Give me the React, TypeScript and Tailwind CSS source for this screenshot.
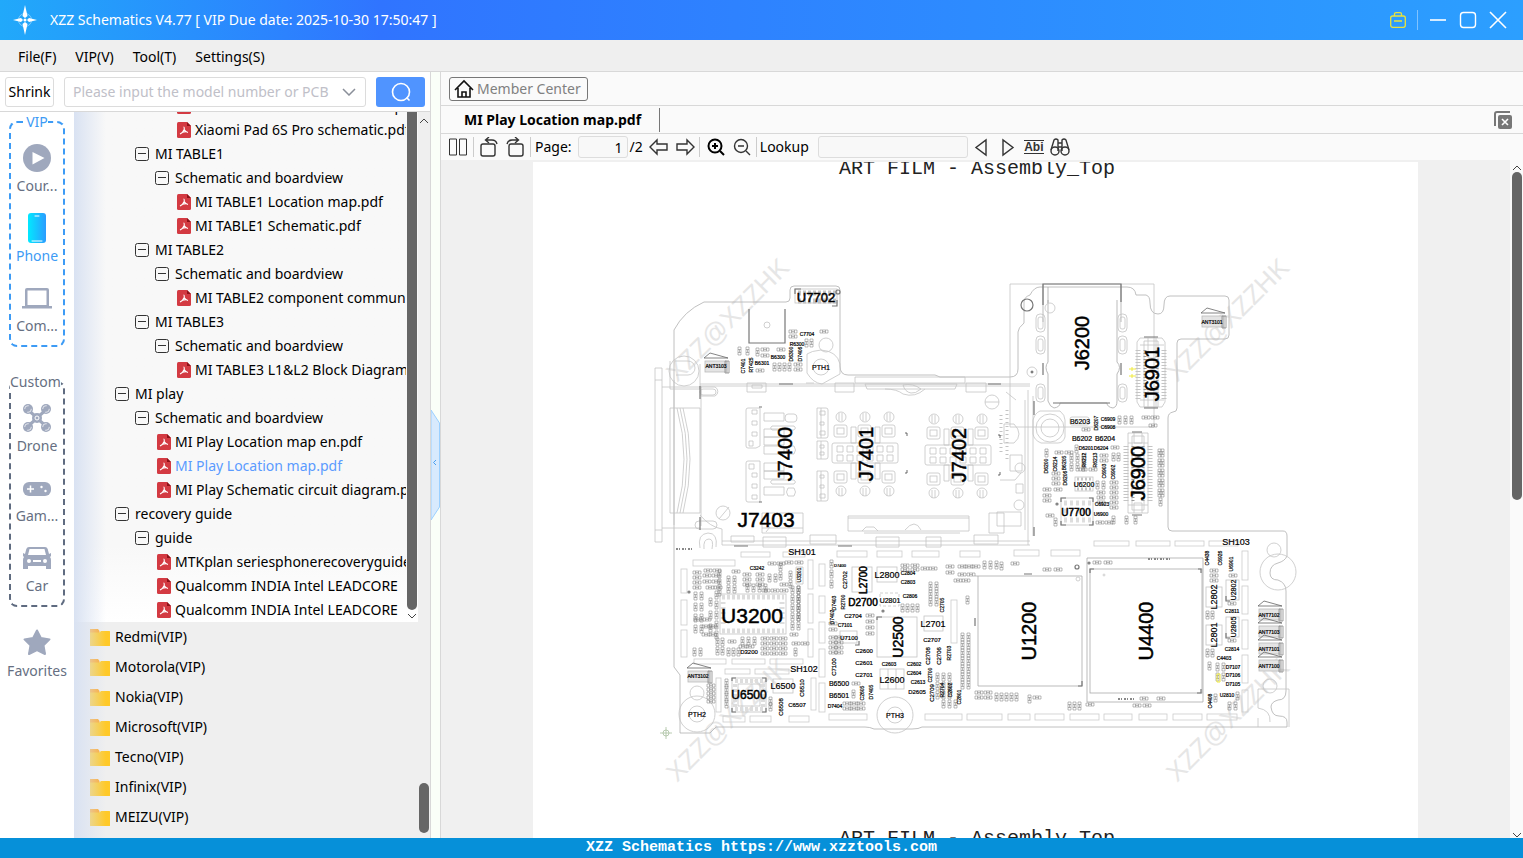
import { useState } from "react";
import type { ReactNode } from "react";

// Arbol de archivos
type TreeRow = {
  name: string;
  kind: "node" | "pdf";
  indent: string;
};

const treeRows: TreeRow[] = [
  { name: "Xiaomi Pad 6S Pro location map.pdf", kind: "pdf", indent: "pl-[103px]" },
  { name: "Xiaomi Pad 6S Pro schematic.pdf", kind: "pdf", indent: "pl-[103px]" },
  { name: "MI TABLE1", kind: "node", indent: "pl-[61px]" },
  { name: "Schematic and boardview", kind: "node", indent: "pl-[81px]" },
  { name: "MI TABLE1 Location map.pdf", kind: "pdf", indent: "pl-[103px]" },
  { name: "MI TABLE1 Schematic.pdf", kind: "pdf", indent: "pl-[103px]" },
  { name: "MI TABLE2", kind: "node", indent: "pl-[61px]" },
  { name: "Schematic and boardview", kind: "node", indent: "pl-[81px]" },
  { name: "MI TABLE2 component communication.pdf", kind: "pdf", indent: "pl-[103px]" },
  { name: "MI TABLE3", kind: "node", indent: "pl-[61px]" },
  { name: "Schematic and boardview", kind: "node", indent: "pl-[81px]" },
  { name: "MI TABLE3 L1&L2 Block Diagram.pdf", kind: "pdf", indent: "pl-[103px]" },
  { name: "MI play", kind: "node", indent: "pl-[41px]" },
  { name: "Schematic and boardview", kind: "node", indent: "pl-[61px]" },
  { name: "MI Play Location map en.pdf", kind: "pdf", indent: "pl-[83px]" },
  { name: "MI Play Location map.pdf", kind: "pdf", indent: "pl-[83px]" },
  { name: "MI Play Schematic circuit diagram.pdf", kind: "pdf", indent: "pl-[83px]" },
  { name: "recovery guide", kind: "node", indent: "pl-[41px]" },
  { name: "guide", kind: "node", indent: "pl-[61px]" },
  { name: "MTKplan seriesphonerecoveryguide.pdf", kind: "pdf", indent: "pl-[83px]" },
  { name: "Qualcomm INDIA Intel LEADCORE", kind: "pdf", indent: "pl-[83px]" },
  { name: "Qualcomm INDIA Intel LEADCORE", kind: "pdf", indent: "pl-[83px]" },
];

const brands = ["Redmi(VIP)", "Motorola(VIP)", "Nokia(VIP)", "Microsoft(VIP)", "Tecno(VIP)", "Infinix(VIP)", "MEIZU(VIP)"];

// Etiquetas de la placa: texto, centro x, centro y, tamaño, vertical
type Label = [string, number, number, number, boolean?];

const labels: Label[] = [
  ["U7702", 816, 297, 13],
  ["J6200", 1082, 343, 20, true],
  ["J6901", 1152, 374, 20, true],
  ["J6900", 1138, 473, 20, true],
  ["J7400", 785, 454, 20, true],
  ["J7401", 866, 454, 20, true],
  ["J7402", 959, 455, 20, true],
  ["J7403", 766, 519, 21],
  ["U3200", 752, 615, 21],
  ["U1200", 1029, 631, 20, true],
  ["U4400", 1146, 631, 20, true],
  ["U2500", 898, 637, 14, true],
  ["U6500", 749, 695, 12],
  ["U7700", 1076, 512, 10],
  ["SH101", 802, 552, 9],
  ["SH102", 804, 669, 9],
  ["SH103", 1236, 542, 9],
  ["D2700", 863, 602, 10],
  ["L2700", 863, 580, 10, true],
  ["L2800", 887, 575, 9],
  ["L2600", 892, 680, 9],
  ["L2701", 933, 624, 9],
  ["L6500", 783, 686, 9],
  ["L2802", 1214, 597, 9, true],
  ["L2801", 1214, 635, 9, true],
  ["U2802", 1233, 590, 7, true],
  ["U2805", 1233, 627, 7, true],
  ["B6203", 1080, 421, 7],
  ["B6202", 1082, 438, 7],
  ["B6204", 1105, 438, 7],
  ["C6909", 1108, 419, 5],
  ["C6908", 1108, 427, 5],
  ["U6200", 1084, 484, 7],
  ["C6923", 1102, 504, 5],
  ["U6900", 1101, 514, 5],
  ["D6201", 1086, 448, 5],
  ["D6204", 1101, 448, 5],
  ["D6207", 1096, 423, 5, true],
  ["D6200", 1046, 466, 5, true],
  ["C6214", 1055, 464, 5, true],
  ["B6205", 1064, 463, 5, true],
  ["D6206", 1065, 478, 5, true],
  ["R6212", 1084, 460, 5, true],
  ["R6213", 1095, 460, 5, true],
  ["C6903", 1104, 471, 5, true],
  ["C6902", 1113, 472, 5, true],
  ["PTH1", 821, 367, 7],
  ["PTH2", 697, 714, 7],
  ["PTH3", 895, 715, 7],
  ["C7704", 807, 334, 5],
  ["R6300", 797, 344, 5],
  ["B6300", 778, 357, 5],
  ["B6301", 762, 363, 5],
  ["C7401", 743, 366, 5, true],
  ["RT425", 751, 365, 5, true],
  ["D6300", 791, 354, 5, true],
  ["D7406", 800, 354, 5, true],
  ["ANT3103", 716, 366, 5],
  ["ANT3101", 1212, 322, 5],
  ["ANT3102", 698, 676, 5],
  ["ANT7102", 1269, 615, 5],
  ["ANT7103", 1269, 632, 5],
  ["ANT7101", 1269, 649, 5],
  ["ANT7100", 1269, 666, 5],
  ["C3242", 757, 568, 5],
  ["D3200", 749, 652, 6],
  ["U3201", 799, 575, 5, true],
  ["C2702", 845, 580, 6, true],
  ["C2804", 908, 573, 5],
  ["C2803", 908, 582, 5],
  ["C2806", 910, 596, 5],
  ["U2801", 890, 600, 7],
  ["D7400", 840, 565, 4],
  ["R2700", 843, 602, 5, true],
  ["D7403", 834, 603, 5, true],
  ["D7402", 832, 617, 5, true],
  ["C2704", 853, 616, 6],
  ["C7101", 845, 625, 5],
  ["U7100", 849, 638, 6],
  ["C2705", 942, 605, 5, true],
  ["C2707", 932, 640, 6],
  ["C2708", 928, 656, 6, true],
  ["C2706", 939, 656, 6, true],
  ["R2703", 949, 653, 5, true],
  ["C2600", 864, 651, 6],
  ["C2601", 864, 663, 6],
  ["C2701", 864, 675, 6],
  ["C2603", 889, 664, 5],
  ["C2602", 914, 664, 5],
  ["C2604", 914, 673, 5],
  ["C2613", 918, 682, 5],
  ["D2605", 917, 692, 6],
  ["C2700", 930, 675, 5, true],
  ["C2709", 932, 693, 6, true],
  ["R2704", 942, 690, 5, true],
  ["C2802", 950, 690, 5, true],
  ["C2801", 959, 697, 5, true],
  ["C7100", 834, 667, 6, true],
  ["B6500", 839, 683, 7],
  ["B6501", 839, 695, 7],
  ["D7404", 835, 706, 5],
  ["C2605", 862, 693, 5, true],
  ["D7405", 871, 692, 5, true],
  ["C6510", 802, 688, 6, true],
  ["C6508", 781, 707, 6, true],
  ["C6507", 797, 705, 6],
  ["C4438", 1207, 558, 5, true],
  ["C6926", 1220, 558, 5, true],
  ["U6901", 1231, 564, 5, true],
  ["C2811", 1232, 611, 5],
  ["C2814", 1232, 649, 5],
  ["C4403", 1224, 658, 5],
  ["D7107", 1233, 667, 5],
  ["D7106", 1233, 675, 5],
  ["D7105", 1233, 684, 5],
  ["U2810", 1227, 695, 5],
  ["C4408", 1210, 701, 5, true],
];

// Grupos de componentes chicos: x, y, columnas, filas, paso x, paso y, vertical
type PadGroup = [number, number, number, number, number, number, boolean?];

const padGroups: PadGroup[] = [
  [693, 571, 1, 4, 0, 5],
  [703, 574, 2, 2, 9, 6],
  [694, 592, 2, 4, 6, 11, true],
  [704, 569, 2, 1, 9, 0],
  [706, 586, 2, 1, 8, 0],
  [709, 598, 1, 3, 0, 13, true],
  [715, 591, 1, 5, 0, 10, true],
  [694, 618, 2, 1, 9, 0],
  [702, 625, 2, 2, 7, 8],
  [693, 648, 2, 1, 6, 0, true],
  [716, 638, 2, 2, 5, 9, true],
  [718, 570, 1, 3, 0, 9, true],
  [727, 576, 2, 2, 6, 9, true],
  [732, 570, 1, 1, 0, 0],
  [743, 573, 2, 3, 13, 5],
  [746, 584, 4, 1, 6, 0, true],
  [762, 589, 3, 1, 9, 0],
  [768, 562, 2, 1, 9, 0],
  [768, 574, 2, 1, 6, 0, true],
  [779, 563, 1, 2, 0, 9, true],
  [780, 583, 1, 1, 0, 0],
  [785, 561, 2, 1, 10, 0],
  [789, 571, 1, 2, 0, 9, true],
  [791, 586, 2, 5, 6, 9, true],
  [797, 586, 1, 4, 0, 9, true],
  [790, 633, 1, 1, 0, 0],
  [792, 642, 2, 1, 9, 0],
  [794, 648, 1, 1, 0, 0, true],
  [728, 640, 1, 1, 0, 0],
  [741, 637, 3, 1, 6, 0, true],
  [761, 637, 3, 4, 9, 5],
  [739, 645, 2, 1, 7, 0],
  [727, 648, 3, 1, 5, 0, true],
  [707, 684, 1, 5, 0, 4],
  [725, 679, 1, 4, 0, 7, true],
  [769, 697, 1, 2, 0, 6, true],
  [830, 560, 1, 3, 0, 10, true],
  [829, 636, 2, 4, 6, 5],
  [829, 622, 1, 2, 0, 6],
  [866, 614, 1, 4, 0, 6],
  [901, 604, 4, 1, 5, 0, true],
  [901, 564, 2, 2, 10, 4],
  [921, 567, 2, 1, 8, 0],
  [946, 565, 1, 2, 0, 6],
  [958, 565, 3, 1, 7, 0],
  [958, 573, 2, 1, 9, 0],
  [954, 579, 2, 1, 8, 0],
  [929, 582, 2, 3, 6, 8, true],
  [966, 596, 1, 1, 0, 0, true],
  [961, 633, 2, 7, 6, 8, true],
  [936, 673, 3, 3, 6, 9, true],
  [942, 700, 3, 1, 6, 0, true],
  [852, 682, 1, 1, 0, 0],
  [852, 690, 1, 1, 0, 0, true],
  [843, 702, 3, 2, 7, 5],
  [983, 561, 3, 1, 6, 0, true],
  [1000, 562, 1, 1, 0, 0, true],
  [1011, 562, 1, 1, 0, 0],
  [1043, 568, 2, 1, 11, 0],
  [1093, 561, 2, 1, 11, 0],
  [975, 691, 2, 2, 9, 5],
  [995, 693, 5, 1, 5, 0, true],
  [1028, 695, 1, 1, 0, 0, true],
  [1033, 696, 1, 1, 0, 0],
  [1068, 702, 3, 1, 5, 0, true],
  [1086, 703, 1, 1, 0, 0],
  [1140, 697, 2, 1, 17, 0],
  [1133, 704, 2, 1, 10, 0],
  [1210, 569, 1, 3, 0, 5],
  [1206, 611, 2, 1, 5, 0, true],
  [1206, 649, 2, 1, 5, 0, true],
  [1208, 662, 1, 1, 0, 0, true],
  [1216, 663, 2, 2, 6, 10, true],
  [1214, 694, 1, 1, 0, 0, true],
  [1228, 702, 2, 1, 6, 0, true],
  [1236, 692, 1, 1, 0, 0, true],
  [1229, 574, 1, 1, 0, 0],
  [1228, 602, 1, 1, 0, 0],
  [1228, 639, 1, 1, 0, 0],
  [1118, 416, 3, 1, 6, 0, true],
  [1142, 416, 2, 1, 9, 0],
  [1149, 424, 1, 1, 0, 0],
  [1082, 428, 1, 1, 0, 0],
  [1045, 449, 1, 1, 0, 0, true],
  [1055, 451, 2, 1, 10, -2],
  [1070, 454, 3, 2, 6, 9, true],
  [1075, 445, 1, 1, 0, 0, true],
  [1100, 454, 1, 2, 0, 5],
  [1111, 446, 1, 1, 0, 0],
  [1112, 453, 2, 1, 5, 0, true],
  [1079, 468, 2, 1, 10, 0],
  [1052, 472, 1, 3, 0, 5],
  [1043, 488, 2, 1, 11, 0],
  [1043, 494, 1, 2, 0, 5],
  [1096, 481, 2, 1, 6, 0, true],
  [1110, 481, 1, 6, 0, 5],
  [1097, 491, 1, 3, 0, 5],
  [1046, 514, 1, 1, 0, 0],
  [1054, 518, 1, 1, 0, 0, true],
  [1096, 521, 2, 1, 9, 0],
  [1112, 516, 1, 1, 0, 0, true],
  [1158, 449, 1, 5, 0, 10, true],
  [1161, 449, 1, 5, 0, 10, true],
  [1159, 498, 1, 1, 0, 0, true],
  [1125, 516, 2, 1, 9, 0, true],
  [789, 330, 1, 2, 0, 5],
  [820, 330, 1, 1, 0, 0],
  [805, 339, 2, 1, 5, 0, true],
  [738, 347, 2, 1, 8, 0, true],
  [761, 348, 2, 1, 16, 0],
  [756, 348, 1, 1, 0, 0, true],
  [761, 354, 1, 1, 0, 0],
  [756, 369, 1, 1, 0, 0],
  [773, 363, 4, 1, 5, 0, true],
  [794, 363, 1, 2, 0, 5],
];

const padPath = padGroups
  .map(([x, y, cols, rows, dx, dy, vertical]) => {
    let d = "";
    for (let c = 0; c < cols; c++) {
      for (let r = 0; r < rows; r++) {
        const px = x + c * dx;
        const py = y + r * dy;
        d += vertical
          ? `M${px} ${py}h3v8h-3zM${px} ${py + 2.5}h3M${px} ${py + 5.5}h3M${px + 1.5} ${py + 2.5}v3`
          : `M${px} ${py}h8v3h-8zM${px + 2.5} ${py}v3M${px + 5.5} ${py}v3M${px + 2.5} ${py + 1.5}h3`;
      }
    }
    return d;
  })
  .join("");

// Segmentos del blindaje: x, y, ancho, alto
const shieldSlots: [number, number, number, number][] = [
  [693, 560, 42, 6], [741, 552, 29, 5], [783, 552, 22, 5], [837, 551, 30, 6], [877, 551, 25, 6], [912, 551, 27, 6],
  [960, 551, 20, 6], [1014, 550, 25, 6], [1051, 550, 29, 6], [1094, 541, 35, 5], [1136, 541, 34, 5], [1175, 541, 29, 5],
  [1209, 541, 29, 5], [681, 569, 6, 24], [681, 600, 6, 25], [681, 630, 6, 27], [808, 560, 5, 29], [808, 594, 5, 29],
  [808, 629, 5, 28], [819, 564, 6, 22], [819, 596, 6, 17], [819, 622, 6, 21], [819, 649, 6, 28], [819, 683, 6, 29],
  [694, 659, 32, 5], [732, 659, 33, 5], [770, 659, 33, 5], [725, 669, 25, 5], [755, 669, 34, 5], [716, 678, 5, 34],
  [723, 716, 22, 6], [750, 716, 21, 6], [789, 716, 20, 6], [811, 678, 5, 32], [829, 714, 38, 6], [925, 714, 37, 6],
  [967, 714, 35, 6], [1008, 714, 22, 6], [1035, 714, 29, 6], [1070, 714, 29, 6], [1104, 714, 28, 6], [1139, 714, 28, 6],
  [1173, 714, 29, 6], [1207, 714, 30, 6], [1242, 551, 6, 29], [1242, 586, 6, 28], [1242, 620, 6, 29], [1242, 655, 6, 28],
  [1242, 690, 6, 22], [951, 600, 6, 43],
];

const BoardText = ({ label }: { label: Label }) => {
  const [text, x, y, size, vertical] = label;
  return (
    <text
      x={x}
      y={y}
      fontSize={size}
      strokeWidth={size > 9 ? 0.5 : 0.2}
      textAnchor="middle"
      dominantBaseline="central"
      transform={vertical ? `rotate(-90 ${x} ${y})` : undefined}
    >
      {text}
    </text>
  );
};

const ButtonConnector = ({ x, y }: { x: number; y: number }) => (
  <g>
    <rect x={x - 33} y={y - 10} width="66" height="20" rx="2" />
    {[-28, -18, -8, 2, 12, 22].map((dx) => (
      <path key={dx} d={`M${x + dx} ${y - 7}h6v6h-6zM${x + dx} ${y + 2}h6v6h-6z`} />
    ))}
    {[-24, 0, 24].map((dx) => (
      <g key={dx}>
        <rect x={x + dx - 7} y={y - 28} width="13" height="12" rx="2" />
        <rect x={x + dx - 4} y={y - 25} width="7" height="6" />
        <circle cx={x + dx} cy={y - 36} r="5" />
        <path d={`M${x + dx - 2} ${y - 40}v8M${x + dx + 1} ${y - 40}v8`} />
        <rect x={x + dx - 7} y={y + 18} width="13" height="12" rx="2" />
        <rect x={x + dx - 4} y={y + 21} width="7" height="6" />
        <circle cx={x + dx} cy={y + 38} r="5" />
        <path d={`M${x + dx - 2} ${y + 35}v8M${x + dx + 1} ${y + 35}v8`} />
      </g>
    ))}
    <path d={`M${x - 14} ${y - 26}h5v16h-5zM${x + 10} ${y - 26}h5v16h-5zM${x - 14} ${y + 10}h5v16h-5zM${x + 10} ${y + 10}h5v16h-5z`} />
    <path d={`M${x + 40} ${y - 20}h2v3M${x + 40} ${y + 20}h2v-3`} stroke="#444" />
  </g>
);

const Antenna = ({ x, y }: { x: number; y: number }) => (
  <g stroke="#888">
    <rect x={x} y={y} width="21" height="11" fill="#e4e4e4" stroke="#bbb" />
    <path d={`M${x + 20} ${y}h4v12h-4zM${x + 22} ${y}v12`} />
    <path d={`M${x - 1} ${y - 3}l6 -5l18 5z`} stroke="#666" />
  </g>
);

const BoardDrawing = () => (
  <svg viewBox="533 162 885 676" className="block w-full" role="img" aria-label="Assembly top board drawing">
    <g fill="#e6e6e6" fontFamily="'Liberation Sans', Arial, sans-serif" fontSize="26">
      {[[677, 383], [1177, 383], [677, 783], [1177, 783]].map(([x, y]) => (
        <text key={`${x}-${y}`} x={x} y={y} transform={`rotate(-45 ${x} ${y})`}>
          XZZ@XZZHK
        </text>
      ))}
    </g>

    <g fill="#222" fontFamily="'Liberation Mono', 'Courier New', monospace" fontSize="20">
      <text x="839" y="174">ART FILM - Assembly_Top</text>
      <text x="839" y="844">ART FILM - Assembly_Top</text>
    </g>

    {/* Contorno de la placa */}
    <g fill="none" stroke="#c4c4c4" strokeWidth="0.8">
      <path d="M674 330Q684 311 704 302H786Q790 302 790 298V290Q790 286 794 286H836Q840 286 840 290V366Q840 375 848 375H935L940 377H1010Q1018 377 1018 369V332Q1018 328 1024 323V302Q1024 297 1030 295Q1034 287 1040 287H1127Q1135 287 1136 295H1146Q1150 296 1150 303Q1150 314 1158 314Q1164 314 1164 305Q1164 296 1170 296H1225Q1229 296 1229 300V335Q1229 339 1225 339H1181Q1177 339 1177 343V408Q1177 412 1173 412Q1168 413 1168 418V527Q1168 531 1172 531H1283Q1287 531 1287 536V556Q1285 561 1278 563Q1270 565 1270 573Q1270 580 1278 580Q1286 583 1286 591V691Q1286 700 1278 700Q1271 702 1271 707Q1272 716 1279 716Q1287 716 1287 722V727H922Q919 729 912 729H874Q870 727 865 727H716L710 733H680V675L674 667Z" stroke="#b0b0b0" />
      <path d="M1010 284H1154V427H1010Z" />
      <path d="M655 368h7v174h-7zM655 380h7M655 530h7M662 387h38M662 528h38M674 380v145M670 408h30v105h-30zM680 408q14 50 0 105M683 408q14 50 0 105M677 408q14 50 0 105" />
      <path d="M700 384H1030M700 386H1030M722 541H1030M722 545H1030M701 386v140M700 515q10 12 22 14v16M1028 390v155M1033 396v140M1025 400v130" />
      <path d="M703 389h10a3 3 0 0 1 0 6h-10a3 3 0 0 1 0-6zM701 387h14a5 5 0 0 1 0 9h-14zM699 521h14a4 4 0 0 1 0 8h-14a4 4 0 0 1 0-8zM700 548q-3-14 8-15q10 0 8 14M704 549q-1-10 5-10q5 0 3 10" />
      <path d="M747 383h19v9h-19zM752 385h10v3h-10zM806 383h8M835 383h19v9h-19zM966 383h20v9h-20zM855 377h110v6h-110zM865 384h92l-2 5h-88z" />
      <path d="M903 385q10-2 18 4q-6 5-10 4q-6-1-8-8M885 389q12 0 18 5q12 4 22-5M731 536h23v6h-23zM763 537h23v10h-23zM810 535h26v9h-26zM876 537h23v10h-23zM926 537h15v10h-15zM974 535h24v9h-24z" />
      <path d="M848 516h121v15h-121zM848 518h121M862 531l4-4h8l4 4M905 530q10-12 16 0M864 533h96M762 513h41v20h-41zM762 528h41M766 532l4-5" />
      <path d="M746 410q0-2 2-2h12v38l-4 2h-8q-2 0-2-2zM746 463q0-2 2-2h12v41h-12q-2 0-2-2z" />
      <path d="M752 410h5v4h-5zM752 421h5v4h-5zM752 432h5v4h-5zM749 441h4v5h-4zM749 464h5v5h-5zM752 473h5v4h-5zM752 484h5v4h-5zM752 495h5v4h-5z" />
      <path d="M764 413h20v8h-20zM764 429h20v8h-20zM764 437h20v8h-20zM764 446h20v8h-20zM764 463h20v8h-20zM764 471h20v8h-20zM764 487h20v8h-20z" />
      <path d="M788 414h6q3 0 3 4t-3 4h-6q-3 0-3-4t3-4zM772 426h22q3 2 0 4h-22q-3-2 0-4zM788 446h6q3 4 0 8h-6q-3-4 0-8zM772 480h22q3 2 0 4h-22q-3-2 0-4zM788 488h6q3 4 0 8h-6q-3-4 0-8z" />
      <path d="M817 408h9q2 0 2 2v26q0 2-2 2h-9zM821 408v30M817 441h9q2 0 2 2v14q0 2-2 2h-9zM821 441v18M817 471h9q2 0 2 2v26q0 2-2 2h-9zM821 471v30M820 411h5v4h-5zM820 422h4v3h-4zM820 431h5v4h-5zM820 445h4v3h-4zM820 452h4v3h-4zM820 475h4v3h-4zM820 485h4v3h-4zM820 494h5v4h-5z" />
      <circle cx="723" cy="513" r="7" />
      <path d="M719 519l10-12" />
      <circle cx="684" cy="371" r="15" />
      <path d="M675 361h13a7 7 0 0 1 0 14h-12M670 361v28h30v-25" />
      <circle cx="767" cy="325" r="3" />
      <circle cx="826" cy="345" r="7" />
      <circle cx="821" cy="367" r="8" />
      <path d="M807 354q4-3 14-4q16 1 19 14v10l-18 10q-9-1-15-11z" />

      {/* J6200 */}
      <path d="M1048 300V362q-4 5 0 12V401q2 6 6 7q6-1 6-5H1107q0 4 6 5q4-1 4-7V374q5-7 0-12V300M1043 284v38M1121 284v38M1048 287v16" stroke="#aaa" />
      {[323, 345, 393].map((y) => (
        <g key={y}>
          <rect x="1036" y={y - 9} width="9" height="18" rx="4" />
          <rect x="1038" y={y - 6} width="5" height="12" rx="2" />
          <rect x="1118" y={y - 9} width="9" height="18" rx="4" />
          <rect x="1120" y={y - 6} width="5" height="12" rx="2" />
        </g>
      ))}
      <circle cx="1050" cy="308" r="5" />
      <circle cx="1032" cy="372" r="5" />
      <circle cx="1032" cy="372" r="1" stroke="#333" />
      <circle cx="1050" cy="428" r="14" />
      <circle cx="1050" cy="428" r="9" />
      <path d="M1040 411h20q5 4 5 9v17q-2 6-7 6h-17q-7-3-8-9v-14q2-7 7-9" />

      {/* J6901 y J6900 */}
      <path d="M1140 338h22l3 4v60l-3 5h-22l-3-5v-60zM1144 341h14v66h-14zM1140 345h24M1140 400h24M1148 338v20h8v-20M1148 407v-18h8v18" />
      <path d="M1128 433h20v80h-20zM1132 436h12v74h-12zM1128 443h20M1128 505h20M1134 433v10h8v-10M1134 513v-10h8v10" />
      <path d="M1138 350v50M1164 350v50M1126 446v56M1150 446v56" strokeWidth="5" strokeDasharray="1 2" />
      <path d="M1145 350v46M1157 350v46M1133 446v56M1143 446v56" stroke="#999" strokeWidth="3" strokeDasharray="1 2" />

      {/* Chips */}
      <rect x="720" y="594" width="66" height="40" />
      <path d="M722 597H784M722 631H784" stroke="#ddd" strokeWidth="5" strokeDasharray="3 2" />
      <path d="M723 602V627M782 602V627" stroke="#ddd" strokeWidth="5" strokeDasharray="2 3" />
      <rect x="732" y="678" width="34" height="34" />
      <rect x="738" y="684" width="22" height="22" />
      <path d="M735 681H764M735 709H764M735 684V707M763 684V707" stroke="#ddd" strokeWidth="4" strokeDasharray="3 2" />
      <rect x="877" y="617" width="40" height="40" />
      <rect x="852" y="567" width="20" height="25" />
      <rect x="877" y="567" width="20" height="15" />
      <rect x="880" y="669" width="24" height="20" />
      <path d="M888 669v20M896 669v20" />
      <rect x="924" y="616" width="19" height="15" />
      <rect x="773" y="679" width="20" height="14" />
      <rect x="880" y="593" width="19" height="13" strokeDasharray="3 2" />
      <rect x="840" y="631" width="17" height="12" />
      <path d="M796 567h7v17h-7z" />
      <path d="M975 576H1082V686H978V576M1087 558H1203V702H1087z" stroke="#aaa" />
      <rect x="1090" y="569" width="112" height="124" stroke="#aaa" />
      <circle cx="1078" cy="579" r="2" />
      <circle cx="1104" cy="575" r="1" />
      <rect x="1206" y="587" width="16" height="20" />
      <rect x="1206" y="625" width="16" height="20" />
      <rect x="1226" y="580" width="13" height="20" />
      <rect x="1226" y="617" width="13" height="20" />
      <rect x="1061" y="498" width="32" height="27" />
      <path d="M1064 503H1091M1064 520H1091M1064 511H1091" stroke="#ddd" strokeWidth="5" strokeDasharray="3 3" />
      <rect x="1075" y="477" width="18" height="14" />
      <path d="M1077 479H1092M1077 489H1092" strokeWidth="3" strokeDasharray="2 2" />
      <rect x="1070" y="417" width="19" height="8" rx="2" />
      <rect x="795" y="289" width="42" height="14" />
      <path d="M798 293H836M798 301H836" strokeWidth="5" strokeDasharray="3 2" />

      {/* Agujeros de montaje */}
      <circle cx="697" cy="714" r="18" />
      <circle cx="697" cy="714" r="8" />
      <circle cx="697" cy="693" r="7" />
      <circle cx="895" cy="715" r="18" />
      <circle cx="895" cy="715" r="8" />
      <circle cx="1278" cy="572" r="18" />
      <circle cx="1274" cy="550" r="7" />
      <circle cx="1270" cy="686" r="7" />
      <path d="M1258 689H1289V727M1258 689v19q13 2 12 14M1258 727v-9" />
      <circle cx="992" cy="402" r="7" />
      <path d="M985 402h14M1004 424h10q5 5 5 10t-5 9h-10zM1006 392l10 8M1010 455h12v16h-12zM1000 480h15l6-7M997 512h24v14h-24zM989 513h15v20h-15zM1016 484h7v9h-7z" />
      <circle cx="1020" cy="468" r="5" />
      <circle cx="1019" cy="505" r="5" />
      <path d="M1007 410v50M1001 415v40" strokeDasharray="1 3" strokeWidth="3" />
      {shieldSlots.map(([x, y, w, h]) => (
        <rect key={`${x}-${y}`} x={x} y={y} width={w} height={h} stroke="#ccc" />
      ))}
      <ButtonConnector x={865} y={453} />
      <ButtonConnector x={958} y={455} />
    </g>

    <path d={padPath} fill="none" stroke="#777" strokeWidth="0.5" />

    {/* Trazos oscuros */}
    <g fill="none" stroke="#777" strokeWidth="1.2">
      <path d="M749 309V343H785V309M1043 305V284H1121V302M1043 363v12M1121 363v12M1053 403H1110M795 294v-5h6M837 300v6h-5" />
      <path d="M700 386v13M700 517v13M779 384h14M734 546h14M838 546h14M1034 401v14M1034 527v9M988 384h13M1024 574h8M1078 686h4v-5M1090 573v-4h4M1198 569h3v4M1197 693h4v-4M975 618v8" />
      <path d="M732 681v-3h4M762 678h4v4M732 708v4h4M762 712h4v-4M877 620v-3h5M855 645h4v-4M1061 502v-4h5M1089 498h4v4M1061 521v4h5M1089 525h4v-4M1226 596v5h4M1226 633v5h4M759 407h3M759 502h3" />
      <path d="M1144 337h14M1144 408h14M1132 432h10M1132 515h10" />
      <circle cx="1027" cy="305" r="6" />
      <circle cx="1077" cy="567" r="2" />
      <circle cx="838" cy="292" r="2" />
      <circle cx="689" cy="592" r="1" />
      <circle cx="1057" cy="504" r="1" />
      <circle cx="1089" cy="563" r="1" />
      <circle cx="883" cy="611" r="1" />
    </g>
    <path d="M1148 559h24M1118 699h16M676 549h18" stroke="#888" strokeWidth="2" strokeDasharray="2 1 1 2" fill="none" />

    <g fill="none" strokeWidth="0.8">
      <Antenna x={705} y={361} />
      <Antenna x={1202} y={316} />
      <Antenna x={688} y={671} />
      <Antenna x={1259} y={609} />
      <Antenna x={1259} y={626} />
      <Antenna x={1259} y={643} />
      <Antenna x={1259} y={660} />
    </g>
    <g fill="none" stroke="#f0ea40" strokeWidth="1">
      <path d="M1129 369h7M1132 367v4M1129 376h7M1132 374v4M1217 674h3v8h-3z" />
    </g>
    <g fill="none" stroke="#a8bfa0" strokeWidth="0.8">
      <circle cx="666" cy="733" r="3" />
      <path d="M660 733h12M666 727v12" />
    </g>

    <g fill="#000" stroke="#000" fontFamily="'Liberation Sans', Arial, sans-serif">
      {labels.map((label) => (
        <BoardText key={label[0]} label={label} />
      ))}
    </g>
  </svg>
);

const PdfIcon = () => (
  <svg viewBox="0 0 14 16" className="h-4 w-[14px] shrink-0" aria-hidden="true">
    <path d="M1.500 0H10l4 4v10.500q0 1.500-1.500 1.500h-11Q0 16 0 14.500v-13Q0 0 1.500 0z" fill="#d33a42" />
    <path d="M10 0l4 4h-4z" fill="#8d1219" />
    <path d="M6.500 5q1 0 .7 2.500Q8.500 10 11 10.500M7.200 7.500Q6 10.500 3 12M5.500 10.300q2-.8 4.500-.6" fill="none" stroke="#fff" strokeWidth="1.100" />
  </svg>
);

const MinusBox = () => (
  <svg viewBox="0 0 14 14" className="size-[14px] shrink-0" fill="none" stroke="#333" aria-hidden="true">
    <rect x="0.500" y="0.500" width="13" height="13" rx="2" />
    <path d="M3 6.500h8" />
  </svg>
);

const FolderIcon = () => (
  <svg viewBox="0 0 20 17" className="h-[17px] w-5 shrink-0" aria-hidden="true">
    <path d="M0 0h8l1.500 2v3H0z" fill="#ffa726" />
    <path d="M0 3.500h9.500l1.500-1.500h8.500l.5.500v14q0 .5-.5.500H.5q-.5 0-.5-.5z" fill="#ffc928" />
  </svg>
);

const Chevron = ({ up }: { up?: boolean }) => (
  <svg viewBox="0 0 10 6" className="h-[6px] w-[10px]" fill="none" stroke="#444" aria-hidden="true">
    <path d={up ? "M1 5l4-4l4 4" : "M1 1l4 4l4-4"} />
  </svg>
);

const SideIcon = ({ children }: { children: ReactNode }) => (
  <svg viewBox="0 0 30 32" className="h-8 w-[30px]" fill="#9fa8bd" aria-hidden="true">
    {children}
  </svg>
);

type SideItemProps = {
  title: string;
  color?: string;
  children: ReactNode;
};

const SideItem = ({ title, color = "text-[#666f82]", children }: SideItemProps) => (
  <button className={`flex h-[70px] w-full flex-col items-center gap-[2px] text-sm ${color}`}>
    <SideIcon>{children}</SideIcon>
    <span>{title}</span>
  </button>
);

const Rotor = ({ x, y }: { x: number; y: number }) => (
  <>
    <circle cx={x} cy={y} r="5" />
    <circle cx={x} cy={y} r="3.300" fill="none" stroke="#fff" strokeWidth="0.700" strokeDasharray="6 4" />
  </>
);

const SideBar = () => (
  <nav className="flex w-[74px] shrink-0 flex-col items-center bg-white">
    <fieldset className="h-[235px] w-14 rounded-lg border-2 border-dashed border-[#3d9bf5]">
      <legend className="mx-auto text-sm leading-5 text-[#3d9bf5]">VIP</legend>
      <div className="pt-[10px]">
        <SideItem title="Cour...">
          <circle cx="15" cy="16" r="14" />
          <path d="M10.500 10v12.500L22.500 16z" fill="#fff" />
        </SideItem>
        <SideItem title="Phone" color="text-[#3d9bf5]">
          <defs>
            <linearGradient id="phone">
              <stop offset="0" stopColor="#02e9ff" />
              <stop offset="1" stopColor="#2b9cff" />
            </linearGradient>
          </defs>
          <rect x="6" y="1" width="18" height="30" rx="3" fill="url(#phone)" />
          <path d="M13 4h4M10 29h10" stroke="#fff" strokeLinecap="round" />
        </SideItem>
        <SideItem title="Com...">
          <path d="M3 24V8q0-2 2-2h20q2 0 2 2v16h3v2.500H0V24zM5.500 8.500V23h19V8.500z" fillRule="evenodd" />
        </SideItem>
      </div>
    </fieldset>
    <fieldset className="mt-[25px] h-[235px] w-14 rounded-lg border-2 border-dashed border-[#5f6b80]">
      <legend className="-mx-[1px] text-sm leading-5 text-[#666f82]">Custom</legend>
      <div className="pt-[10px]">
        <SideItem title="Drone">
          <path d="M5 7L13 14M25 7L17 14M5 25l8-7M25 25l-8-7" stroke="#9fa8bd" strokeWidth="3" />
          <Rotor x={6} y={7} />
          <Rotor x={24} y={7} />
          <Rotor x={6} y={25} />
          <Rotor x={24} y={25} />
          <circle cx="15" cy="16" r="5" />
          <circle cx="15" cy="16" r="2" fill="none" stroke="#fff" />
        </SideItem>
        <SideItem title="Gam...">
          <rect x="1" y="10" width="28" height="14" rx="6" />
          <path d="M5 17h7M8.500 13.500v7" stroke="#fff" strokeWidth="1.500" />
          <circle cx="19.500" cy="15" r="1.200" fill="#fff" />
          <circle cx="23.500" cy="19" r="1.200" fill="#fff" />
        </SideItem>
        <SideItem title="Car">
          <path d="M7 5h16q2 0 2.700 2L27 12l2-1v3l-1 1q1 1 1 3v9h-5v-3H6v3H1v-9q0-2 1-3l-1-1v-3l2 1l1.300-5Q5 5 7 5zM7.500 7L6 13h18l-1.500-6zM7 17a2 2 0 1 0 0 4a2 2 0 0 0 0-4zM23 17a2 2 0 1 0 0 4a2 2 0 0 0 0-4zM11 18v2h8v-2z" fillRule="evenodd" />
        </SideItem>
      </div>
    </fieldset>
    <div className="mt-5 w-full">
      <SideItem title="Favorites">
        <path d="M15 3.500l4 7.600l8.500 1.300l-6 6l1.500 8.600L15 23l-8 4l1.500-8.600l-6-6L11 11.100z" stroke="#9fa8bd" strokeWidth="2" strokeLinejoin="round" />
      </SideItem>
    </div>
  </nav>
);

const FileTree = () => {
  const [selected, setSelected] = useState("MI Play Location map.pdf");

  return (
    <div className="flex min-h-0 min-w-0 flex-1 bg-[#efefef]">
      <div className="relative flex min-w-0 flex-1 flex-col">
        <div className="flex h-[510px] w-[344px] shrink-0 bg-linear-to-b from-[#f8f8f8] from-85% to-white">
          <ul className="flex min-w-0 flex-1 flex-col justify-end overflow-hidden">
            {treeRows.map((row, i) => (
              <li key={i} className={`h-6 shrink-0 ${row.indent}`}>
                <button
                  className={`flex h-6 items-center whitespace-nowrap ${row.kind === "node" ? "gap-[6px]" : "gap-1"} ${
                    selected === row.name ? "text-[#5b9bff]" : "text-black"
                  }`}
                  onClick={() => setSelected(row.name)}
                >
                  {row.kind === "node" ? <MinusBox /> : <PdfIcon />}
                  {row.name}
                </button>
              </li>
            ))}
          </ul>
          <div className="flex w-[12px] shrink-0 flex-col items-center">
            <div className="w-[10px] flex-1 rounded-b-full bg-[#666]" />
            <div className="flex h-3 items-center">
              <Chevron />
            </div>
          </div>
        </div>
        <ul className="min-h-0 flex-1 overflow-hidden">
          {brands.map((brand) => (
            <li key={brand}>
              <button className="flex h-[30px] items-center gap-[5px] pl-4">
                <FolderIcon />
                {brand}
              </button>
            </li>
          ))}
        </ul>
        <div className="pointer-events-none absolute inset-y-0 left-0 w-8 bg-linear-to-r from-[#d9e2f2] to-transparent" />
      </div>
      <div className="flex w-3 shrink-0 flex-col items-center pt-[6px] pb-[5px]">
        <Chevron up />
        <div className="mt-auto h-[50px] w-[10px] rounded-full bg-[#666]" />
      </div>
    </div>
  );
};

const TitleBar = () => (
  <header className="flex h-10 shrink-0 items-center bg-linear-to-r from-[#21a9fa] via-[#3074ff] via-25% to-[#2c9fff] text-white">
    <svg viewBox="0 0 24 30" className="ml-[13px] h-[30px] w-6" aria-hidden="true">
      <path d="M12 0l2.500 11L12 13l-2.500-2zM12 30l2.500-11L12 17l-2.500 2zM0 15l8-2l2 2l-2 2zM24 15l-8-2l-2 2l2 2z" fill="#fff" />
      <circle cx="12" cy="15" r="6.500" fill="none" stroke="#fff" strokeWidth="0.700" opacity="0.600" />
      <circle cx="12" cy="15" r="1.500" fill="#fff" />
    </svg>
    <h1 className="ml-[13px] text-sm">XZZ Schematics V4.77 [ VIP Due date: 2025-10-30 17:50:47 ]</h1>
    <div className="mr-4 ml-auto flex items-center">
      <button aria-label="Toolbox">
        <svg viewBox="0 0 16 16" className="size-4" fill="none" stroke="#e9e33c" strokeWidth="1.300">
          <rect x="0.700" y="4" width="14.600" height="11.300" rx="2" />
          <path d="M4.500 4V2q0-1.300 1.500-1.300h4q1.500 0 1.500 1.300v2M4 9h8" />
        </svg>
      </button>
      <span className="mx-[11px] h-5 w-px bg-white/40" />
      <button aria-label="Minimize">
        <svg viewBox="0 0 18 18" className="size-[18px]" stroke="#fff" strokeWidth="1.600">
          <path d="M1 9h16" />
        </svg>
      </button>
      <button aria-label="Maximize" className="mx-3">
        <svg viewBox="0 0 18 18" className="size-[18px]" fill="none" stroke="#fff" strokeWidth="1.400">
          <rect x="1.500" y="1.500" width="15" height="15" rx="3" />
        </svg>
      </button>
      <button aria-label="Close">
        <svg viewBox="0 0 18 18" className="size-[18px]" stroke="#fff" strokeWidth="1.600">
          <path d="M1 1l16 16M17 1L1 17" />
        </svg>
      </button>
    </div>
  </header>
);

const ToolButton = ({ title, children }: { title: string; children: ReactNode }) => (
  <button aria-label={title} title={title}>
    <svg viewBox="0 0 20 20" className="size-5" fill="none" stroke="#333" strokeWidth="1.400">
      {children}
    </svg>
  </button>
);

const Divider = () => <span className="h-5 w-px bg-[#ccc]" />;

const PdfToolbar = () => {
  const [page, setPage] = useState("1");
  const [lookup, setLookup] = useState("");

  return (
    <div className="flex h-[26px] shrink-0 items-center bg-[#fafafa] pl-[7px]">
      <ToolButton title="Two pages">
        <path d="M1.500 2h7v16h-7zM11.500 2h7v16h-7z" strokeWidth="1" />
      </ToolButton>
      <span className="ml-[5px] flex items-center gap-[5px]">
        <Divider />
        <ToolButton title="Rotate left">
          <rect x="2" y="7" width="14" height="12" rx="2" />
          <path d="M7 3h6q4 0 5 4M10 0L6.500 3L10 6" />
        </ToolButton>
      </span>
      <span className="ml-[6px] flex items-center gap-[5px]">
        <ToolButton title="Rotate right">
          <rect x="4" y="7" width="14" height="12" rx="2" />
          <path d="M13 3H7Q3 3 2 7M10 0l3.500 3L10 6" />
        </ToolButton>
        <Divider />
      </span>
      <label htmlFor="page" className="ml-1">
        Page:
      </label>
      <input
        id="page"
        className="mr-[2px] ml-[6px] h-[22px] w-[50px] rounded-[3px] border border-[#ddd] bg-[#f8f8f8] px-1 text-right"
        value={page}
        onChange={(e) => setPage(e.target.value)}
      />
      <span>/2</span>
      <span className="ml-[6px] flex items-center gap-[6px]">
        <ToolButton title="Previous page">
          <path d="M1 10l7-7v4h10v6H8v4z" />
        </ToolButton>
        <ToolButton title="Next page">
          <path d="M19 10l-7-7v4H2v6h10v4z" />
        </ToolButton>
      </span>
      <span className="ml-1 flex items-center gap-[6px]">
        <Divider />
        <ToolButton title="Zoom in">
          <circle cx="9" cy="9" r="6.500" stroke="#000" strokeWidth="2" />
          <path d="M6 9h6M9 6v6M14 14l4 4" stroke="#000" strokeWidth="2" />
        </ToolButton>
        <ToolButton title="Zoom out">
          <circle cx="9" cy="9" r="6.500" />
          <path d="M6 9h6M14 14l4 4" />
        </ToolButton>
      </span>
      <span className="ml-1 flex items-center gap-[3px]">
        <Divider />
        <label htmlFor="lookup">Lookup</label>
      </span>
      <input
        id="lookup"
        className="ml-[9px] h-[22px] w-[150px] rounded-[3px] border border-[#ddd] bg-[#f8f8f8] px-1"
        value={lookup}
        onChange={(e) => setLookup(e.target.value)}
      />
      <span className="ml-1 flex items-center gap-[6px]">
        <ToolButton title="Find previous">
          <path d="M14 3v15L4 10.500z" />
        </ToolButton>
        <ToolButton title="Find next">
          <path d="M5 3v15l10-7.500z" />
        </ToolButton>
        <button className="h-[14px] w-5 border-y border-[#333] text-center font-['Liberation_Sans',sans-serif] text-xs leading-3 font-bold text-[#333]">
          Abi
        </button>
        <ToolButton title="Search in document">
          <circle cx="5" cy="14" r="4" />
          <circle cx="15" cy="14" r="4" />
          <path d="M1 13L4 3q2-2 4 0v11M19 13L16 3q-2-2-4 0v11M8 6h4M8 10h4" />
        </ToolButton>
      </span>
    </div>
  );
};

const Splitter = () => (
  <div className="flex w-[11px] shrink-0 flex-col justify-center border-x border-[#d8d8d8] bg-[#fafff8]">
    <button aria-label="Collapse panel" className="mb-[-20px]">
      <svg viewBox="0 0 9 110" className="h-[110px] w-[9px]" fill="none">
        <path d="M0 0L8.500 13V97L0 110z" fill="#d8eafd" stroke="#9bd0ff" />
        <path d="M5 50L2.500 52.500l2.500 2.500" stroke="#4a9ff0" />
      </svg>
    </button>
  </div>
);

export default function App() {
  const [model, setModel] = useState("");

  return (
    <div className="flex h-screen flex-col overflow-hidden bg-[#efefef] font-['Noto_Sans','Noto_Sans_CJK_SC',sans-serif] text-sm text-black">
      <TitleBar />
      <nav className="flex h-8 shrink-0 items-center gap-[19px] border-b border-[#d8d8d8] bg-[#efefef] pt-[2px] pl-[18px]">
        <button>File(F)</button>
        <button>VIP(V)</button>
        <button>Tool(T)</button>
        <button>Settings(S)</button>
      </nav>

      <div className="flex min-h-0 flex-1">
        <aside className="flex w-[430px] shrink-0 flex-col">
          <div className="flex h-10 shrink-0 items-center border-b border-[#d8d8d8] bg-white pl-[5px]">
            <button className="h-[30px] w-[49px] rounded-[3px] border border-[#dcdcdc] text-center">Shrink</button>
            <div className="ml-[10px] flex h-[30px] w-[302px] items-center rounded-[3px] border border-[#dcdcdc] pl-2">
              <input
                aria-label="Model number or PCB"
                className="w-[264px] outline-none placeholder:text-[#c0c0c8]"
                placeholder="Please input the model number or PCB"
                value={model}
                onChange={(e) => setModel(e.target.value)}
              />
              <svg viewBox="0 0 14 8" className="ml-[5px] h-2 w-[14px]" fill="none" stroke="#8a8f99" strokeWidth="1.500" aria-hidden="true">
                <path d="M1 1l6 6l6-6" />
              </svg>
            </div>
            <button aria-label="Search" className="ml-[10px] flex h-[30px] w-[49px] items-center justify-center rounded-[3px] bg-[#5094ff]">
              <svg viewBox="0 0 20 20" className="size-5" fill="none" stroke="#fff" strokeWidth="1.600">
                <circle cx="10" cy="10" r="8.500" />
                <path d="M15.500 15.500l3 3" />
              </svg>
            </button>
          </div>
          <div className="flex min-h-0 flex-1">
            <SideBar />
            <FileTree />
          </div>
        </aside>

        <Splitter />

        <main className="flex min-w-0 flex-1 flex-col">
          <div className="flex h-[34px] shrink-0 items-center border-b border-[#d8d8d8] bg-[#fafafa] pl-2">
            <button className="flex h-6 w-[139px] items-center gap-[3px] rounded-[3px] border border-[#777] pl-1 whitespace-nowrap text-[#808080]">
              <svg viewBox="0 0 20 20" className="size-5 shrink-0" fill="none" stroke="#111" strokeWidth="1.600" aria-hidden="true">
                <path d="M1 11l9-9l9 9M4 9v9h12V9M8 18v-5h4v5" />
              </svg>
              Member Center
            </button>
          </div>
          <div className="flex h-7 shrink-0 items-center border-b border-[#d8d8d8] bg-[#fafafa] pr-[11px]">
            <button className="h-6 border-r border-[#777] pr-[18px] pl-[23px] font-bold">MI Play Location map.pdf</button>
            <button aria-label="Close all tabs" className="ml-auto">
              <svg viewBox="0 0 18 18" className="size-[18px]">
                <path d="M1 15V3q0-2 2-2h13" fill="none" stroke="#777" strokeWidth="2" />
                <rect x="4" y="4" width="14" height="14" rx="2" fill="#777" />
                <path d="M8 8l6 6M14 8l-6 6" stroke="#fff" strokeWidth="1.600" />
              </svg>
            </button>
          </div>
          <PdfToolbar />
          <div className="flex min-h-0 flex-1">
            <div className="min-w-0 flex-1 overflow-hidden bg-[#f0f0f0] pt-[2px]">
              <div className="mx-auto w-[885px] max-w-full bg-white">
                <BoardDrawing />
              </div>
            </div>
            <div className="flex w-[13px] shrink-0 flex-col items-center bg-[#fafafa] pt-[5px]">
              <Chevron up />
              <div className="mt-[1px] h-[328px] w-[10px] rounded-full bg-[#666]" />
              <div className="mt-auto">
                <Chevron />
              </div>
            </div>
          </div>
        </main>
      </div>

      <footer className="h-5 shrink-0 bg-[#0690d9] text-center font-['Liberation_Mono',monospace] text-[15px] leading-5 font-bold text-white">
        XZZ Schematics https://www.xzztools.com
      </footer>
    </div>
  );
}
